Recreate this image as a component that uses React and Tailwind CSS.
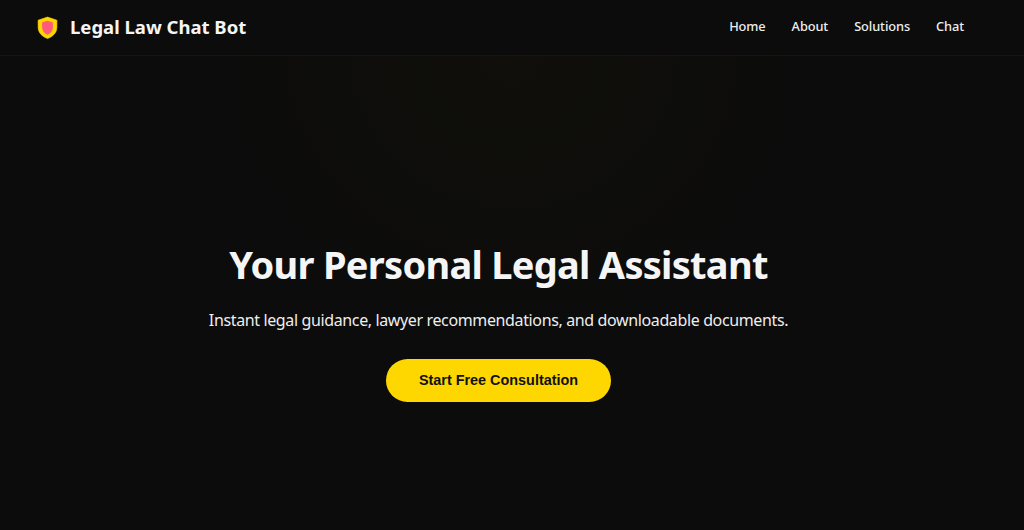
const navLinks = ["Home", "About", "Solutions", "Chat"];

const ShieldLogo = () => (
  <svg viewBox="0 0 24 24" className="h-[25px] w-[25px]">
    <path
      d="M12 2 L21 5 V11.5 C21 17 17.2 20.8 12 22.5 C6.8 20.8 3 17 3 11.5 V5 Z"
      fill="#ffd700"
      stroke="#ffd700"
      strokeWidth="0.6"
      strokeLinejoin="round"
    />
    <path d="M12 5.5 L17.2 7.3 V11.8 C17.2 15.2 15.2 17.6 12 19 C8.8 17.6 6.8 15.2 6.8 11.8 V7.3 Z" fill="#ff5c7a" />
  </svg>
);

export default function App() {
  return (
    <div className="flex h-[530px] flex-col overflow-hidden bg-[#0c0c0c] font-['Noto_Sans',sans-serif] text-[#f5f5f5]">
      {/* Navbar */}
      <header className="flex h-[56px] shrink-0 items-center justify-between border-b border-[#16150f] pl-[35px] pr-[60px]">
        <div className="-mt-[1px] flex items-center gap-[10px]">
          <ShieldLogo />
          <span className="text-[18.5px] font-bold">Legal Law Chat Bot</span>
        </div>
        <nav className="-mt-[1px] flex gap-[26px]">
          {navLinks.map((link) => (
            <a key={link} href="#" className="text-[12.8px] font-medium tracking-[-0.1px] text-[#eeeeee]">
              {link}
            </a>
          ))}
        </nav>
      </header>

      {/* Hero */}
      <main className="flex flex-1 flex-col items-center bg-[radial-gradient(ellipse_at_50%_0%,#100f0a_0%,#0c0c0c_40%)] pr-[27px] pt-[184px]">
        <h1 className="text-[38px] leading-[48px] font-bold tracking-[-0.72px]">Your Personal Legal Assistant</h1>
        <p className="mt-[20px] text-[16px] leading-[24px] tracking-[-0.37px] text-[#eeeeee]">
          Instant legal guidance, lawyer recommendations, and downloadable documents.
        </p>
        <button className="mt-[27px] h-[43px] w-[225px] rounded-full bg-[#ffd700] font-['Liberation_Sans',sans-serif] text-[14.4px] font-bold text-[#111111]">
          Start Free Consultation
        </button>
      </main>
    </div>
  );
}
